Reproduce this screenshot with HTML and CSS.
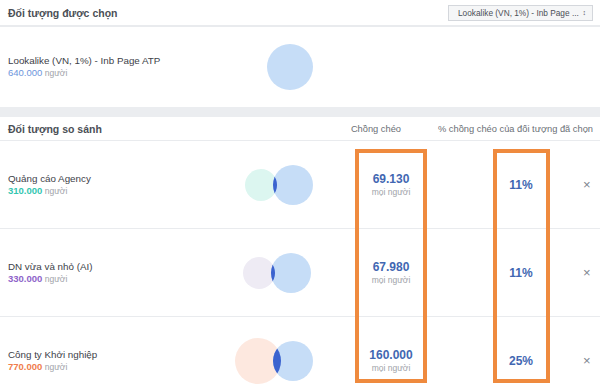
FILE: index.html
```html
<!DOCTYPE html>
<html lang="vi">

<head>
    <meta charset="UTF-8">
    <meta name="viewport" content="width=device-width, initial-scale=1.0">
    <title>Đối tượng chồng chéo</title>
    <link rel="stylesheet" href="styles.css">
</head>

<body>
    <div class="trang">
        <div class="tieu-de">
            <span>Đối tượng được chọn</span>
            <div class="chon"><span>Lookalike (VN, 1%) - Inb Page ...</span><span class="mui-ten">&#8597;</span></div>
        </div>
        <div class="dong-chon">
            <div class="ten">
                <div class="ten-chinh">Lookalike (VN, 1%) - Inb Page ATP</div>
                <div class="so"><span class="xanh">640.000</span> người</div>
            </div>
            <svg class="hinh" width="100" height="50" viewBox="0 0 100 50">
                <circle cx="60" cy="25" r="23" fill="#c6ddf7" />
            </svg>
        </div>
        <div class="dai-xam"></div>

        <div class="tieu-de tieu-de-2">
            <span>Đối tượng so sánh</span>
            <div class="cot-tieu-de">
                <span class="cot-cheo">Chồng chéo</span>
                <span>% chồng chéo của đối tượng đã chọn</span>
            </div>
        </div>

        <div class="dong">
            <div class="ten">
                <div class="ten-chinh">Quảng cáo Agency</div>
                <div class="so"><span class="teal">310.000</span> người</div>
            </div>
            <svg class="hinh" width="100" height="50" viewBox="0 0 100 50">
                <defs><clipPath id="c1"><circle cx="31" cy="25" r="16" /></clipPath></defs>
                <circle cx="31" cy="25" r="16" fill="#dcf6f0" />
                <circle cx="63" cy="25" r="20" fill="#c6ddf7" />
                <circle cx="63" cy="25" r="20" fill="#3b63cf" clip-path="url(#c1)" />
            </svg>
            <div class="cheo"><b>69.130</b><small>mọi người</small></div>
            <div class="phan-tram">11%</div>
            <div class="xoa">&times;</div>
        </div>

        <div class="dong">
            <div class="ten">
                <div class="ten-chinh">DN vừa và nhỏ (AI)</div>
                <div class="so"><span class="tim">330.000</span> người</div>
            </div>
            <svg class="hinh" width="100" height="50" viewBox="0 0 100 50">
                <defs><clipPath id="c2"><circle cx="29" cy="25" r="16" /></clipPath></defs>
                <circle cx="29" cy="25" r="16" fill="#eeebf4" />
                <circle cx="61" cy="25" r="20" fill="#c6ddf7" />
                <circle cx="61" cy="25" r="20" fill="#3b63cf" clip-path="url(#c2)" />
            </svg>
            <div class="cheo"><b>67.980</b><small>mọi người</small></div>
            <div class="phan-tram">11%</div>
            <div class="xoa">&times;</div>
        </div>

        <div class="dong">
            <div class="ten">
                <div class="ten-chinh">Công ty Khởi nghiệp</div>
                <div class="so"><span class="cam">770.000</span> người</div>
            </div>
            <svg class="hinh" width="100" height="50" viewBox="0 0 100 50">
                <defs><clipPath id="c3"><circle cx="28" cy="25" r="23" /></clipPath></defs>
                <circle cx="28" cy="25" r="23" fill="#fde8df" />
                <circle cx="63" cy="25" r="20" fill="#c6ddf7" />
                <circle cx="63" cy="25" r="20" fill="#3b63cf" clip-path="url(#c3)" />
            </svg>
            <div class="cheo"><b>160.000</b><small>mọi người</small></div>
            <div class="phan-tram">25%</div>
            <div class="xoa">&times;</div>
        </div>

        <!-- khung đánh dấu -->
        <div class="khung khung-1"></div>
        <div class="khung khung-2"></div>
    </div>
</body>

</html>
```

FILE: styles.css
```css
body {
    margin: 0;
    font-family: "Liberation Sans", Arial, sans-serif;
    color: #4b4f56;
    background: #fff;
}

.trang {
    position: relative;
    width: 600px;
    height: 386px;
    overflow: hidden;
}

.tieu-de {
    display: flex;
    justify-content: space-between;
    align-items: center;
    height: 25px;
    padding: 0 7px 0 8px;
    border-bottom: 2px solid #e9ebee;
    font-size: 10.5px;
    font-weight: bold;
}

.chon {
    display: flex;
    justify-content: space-between;
    box-sizing: border-box;
    width: 145px;
    height: 16px;
    line-height: 14px;
    padding: 0 6px 0 9px;
    border: 1px solid #d4d7dc;
    background: #f5f6f7;
    font-size: 8.3px;
    font-weight: normal;
    color: #4b4f56;
    white-space: nowrap;
}

.mui-ten {
    font-size: 7px;
}

.dong-chon {
    display: flex;
    align-items: center;
    height: 80px;
}

.ten {
    width: 222px;
    padding-left: 8px;
}

.ten-chinh {
    font-size: 9.8px;
    line-height: 12px;
    color: #3d4148;
}

.so {
    font-size: 8.5px;
    line-height: 12px;
    color: #a0a3a9;
}

.so span {
    font-size: 9.5px;
}

.xanh { color: #6d95dc; }
.teal { color: #33c6b0; font-weight: bold; }
.tim { color: #8e63c9; font-weight: bold; }
.cam { color: #f07d4d; font-weight: bold; }

.dai-xam {
    height: 10px;
    background: #ebedf0;
}

.tieu-de-2 {
    height: 23px;
    border-bottom: 1px solid #e9ebee;
}

.cot-tieu-de {
    display: flex;
    font-size: 9.3px;
    font-weight: normal;
    color: #6b6f76;
}

.cot-cheo {
    margin-right: 37px;
}

.dong {
    display: flex;
    align-items: center;
    height: 87px;
    border-bottom: 1px solid #e9ebee;
}

.cheo {
    width: 122px;
    display: flex;
    flex-direction: column;
    align-items: center;
    margin-top: -1px;
}

.cheo b {
    font-size: 12px;
    color: #4267b2;
}

.cheo small {
    font-size: 8.5px;
    color: #a0a3a9;
    margin-top: 1px;
}

.phan-tram {
    width: 138px;
    text-align: center;
    font-size: 12px;
    font-weight: bold;
    color: #4267b2;
}

.xoa {
    margin-left: -7px;
    font-size: 13px;
    color: #7d848e;
}

.khung {
    position: absolute;
    top: 149px;
    height: 226px;
    border: 4px solid #ef8a3e;
}

.khung-1 {
    left: 355px;
    width: 64px;
}

.khung-2 {
    left: 493px;
    width: 49px;
}
```
